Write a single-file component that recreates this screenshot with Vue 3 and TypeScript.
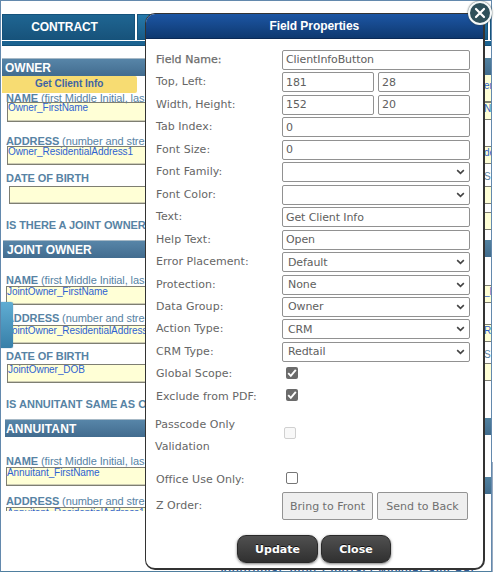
<script setup lang="ts">
import { ref } from 'vue'

type Kind = 'text' | 'pair' | 'select' | 'check'
interface Row {
  label: string
  kind: Kind
  values: string[]
  strong?: boolean
}

const rows = ref<Row[]>([
  { label: 'Field Name:', kind: 'text', values: ['ClientInfoButton'], strong: true },
  { label: 'Top, Left:', kind: 'pair', values: ['181', '28'] },
  { label: 'Width, Height:', kind: 'pair', values: ['152', '20'] },
  { label: 'Tab Index:', kind: 'text', values: ['0'] },
  { label: 'Font Size:', kind: 'text', values: ['0'] },
  { label: 'Font Family:', kind: 'select', values: [''] },
  { label: 'Font Color:', kind: 'select', values: [''] },
  { label: 'Text:', kind: 'text', values: ['Get Client Info'] },
  { label: 'Help Text:', kind: 'text', values: ['Open'] },
  { label: 'Error Placement:', kind: 'select', values: ['Default'] },
  { label: 'Protection:', kind: 'select', values: ['None'] },
  { label: 'Data Group:', kind: 'select', values: ['Owner'] },
  { label: 'Action Type:', kind: 'select', values: ['CRM'] },
  { label: 'CRM Type:', kind: 'select', values: ['Redtail'] },
  { label: 'Global Scope:', kind: 'check', values: [] },
  { label: 'Exclude from PDF:', kind: 'check', values: [] },
])
</script>

<template>
  <main class="screen">
    <div class="page">
      <nav class="tabs">
        <div class="tab">CONTRACT</div>
        <div class="tab next"></div>
        <div class="tab last"></div>
      </nav>
      <div class="columns">
        <div class="form">
          <section class="owner">
            <h2>OWNER</h2>
            <div class="client">Get Client Info</div>
            <p class="cap"><b>NAME</b> (first Middle Initial, las</p>
            <div class="box first">Owner_FirstName</div>
            <p class="cap address"><b>ADDRESS</b> (number and stre</p>
            <div class="box">Owner_ResidentialAddress1</div>
            <p class="cap dob"><b>DATE OF BIRTH</b></p>
            <div class="box birth"></div>
            <p class="cap question"><b>IS THERE A JOINT OWNER</b></p>
          </section>
          <section class="joint">
            <h2>JOINT OWNER</h2>
            <p class="cap name"><b>NAME</b> (first Middle Initial, las</p>
            <div class="box">JointOwner_FirstName</div>
            <p class="cap address"><b>ADDRESS</b> (number and stre</p>
            <div class="box">JointOwner_ResidentialAddress</div>
            <p class="cap dob"><b>DATE OF BIRTH</b></p>
            <div class="box joint-dob">JointOwner_DOB</div>
            <p class="cap question"><b>IS ANNUITANT SAME AS O</b></p>
          </section>
          <section class="annuitant">
            <h2>ANNUITANT</h2>
            <p class="cap name"><b>NAME</b> (first Middle Initial, las</p>
            <div class="box">Annuitant_FirstName</div>
            <p class="cap address"><b>ADDRESS</b> (number and stre</p>
            <div class="box cut">Annuitant_ResidentialAddress1</div>
          </section>
        </div>
        <div class="edge">
          <div class="bar"></div>
          <div class="cell tall">er</div>
          <div class="cell">N</div>
          <div class="cell s25">de</div>
          <div class="st">ST</div>
          <div class="cell"></div>
          <div class="cell s8"></div>
          <div class="bar s9"></div>
          <div class="cell s28">_F</div>
          <div class="cell s20">R</div>
          <div class="st low">ST</div>
          <div class="cell"></div>
          <div class="bar s36"></div>
          <div class="bar s42"></div>
          <div class="cell s30">SS</div>
        </div>
      </div>
      <p class="bottom-copy">Additional Joint Contract Number and Rel</p>
    </div>
    <div class="scroll-edge"></div>
    <div class="drawer"></div>

    <section class="dialog">
      <header>Field Properties</header>
      <div class="body">
        <div v-for="row in rows" :key="row.label" class="row">
          <label :class="{ strong: row.strong }">{{ row.label }}</label>
          <div class="control">
            <template v-if="row.kind !== 'check'">
              <div v-for="(value, i) in row.values" :key="i" class="input" :class="row.kind">
                <span>{{ value }}</span>
                <svg v-if="row.kind === 'select'" viewBox="0 0 10 6"><path d="M1.3 1 5 4.5 8.7 1" /></svg>
              </div>
            </template>
            <div v-else class="check on"><svg viewBox="0 0 12 12"><path d="M2.2 6.2 4.8 8.8 9.8 2.9" /></svg></div>
          </div>
        </div>
        <div class="row passcode">
          <label>Passcode Only<br />Validation</label>
          <div class="control"><div class="check disabled"></div></div>
        </div>
        <div class="row office">
          <label>Office Use Only:</label>
          <div class="control"><div class="check"></div></div>
        </div>
        <div class="row order">
          <label>Z Order:</label>
          <div class="control"><button>Bring to Front</button><button>Send to Back</button></div>
        </div>
      </div>
      <footer><button class="update">Update</button><button>Close</button></footer>
    </section>
    <div class="close"><svg viewBox="0 0 12 12"><path d="M2 2 10 10M10 2 2 10" /></svg></div>
  </main>
</template>

<style>
body { margin: 0; background: #fff; }
</style>

<style scoped>
* { box-sizing: border-box; }
h2, p { margin: 0; }
.screen { position: relative; width: 503px; height: 572px; overflow: hidden; background: #fff; font-family: "Liberation Sans", Arial, sans-serif; }
.page { position: relative; width: 492px; height: 572px; overflow: hidden; border: 1px solid #6389ad; border-bottom-color: #4f7f9f; padding: 13px 0 0 1px; }
.tabs { display: flex; height: 32px; background: #1b6391; border-bottom: 1px solid #135078; }
.tab { flex: none; width: 135px; height: 27px; border-right: 2px solid #fff; border-bottom: 1px solid #fff; background: linear-gradient(#1f6693, #17527a); color: #fff; font-size: 12px; font-weight: bold; line-height: 27px; text-align: center; padding-right: 8px; letter-spacing: -0.1px; box-shadow: inset 0 0 0 1px #15537c; }
.tab.next { width: 353px; background: linear-gradient(#267bad, #185984); }
.tab.last { width: 1px; border-right: 0; }
.columns { display: flex; justify-content: space-between; margin-top: 12px; height: 453px; }
.form { width: 150px; overflow: hidden; }
h2 { height: 18px; border-top: 1px solid #a7b9c6; background: linear-gradient(#5785a8, #426c8f); color: #fff; font-size: 12px; line-height: 18px; padding-left: 3px; white-space: nowrap; }
.client { width: 135px; height: 17px; border-radius: 0 2px 2px 0; background: #f7dc72; color: #3d63a5; font-size: 10px; font-weight: bold; line-height: 16px; padding-left: 33px; }
.cap { height: 10px; margin-left: 4px; color: #5783a4; font-size: 11px; line-height: 10px; white-space: nowrap; letter-spacing: -0.09px; }
.box { width: 160px; height: 19px; margin-left: 5px; border: 1px solid #7e7e72; background: #ffffd6; box-shadow: inset 0 -1px #cecdb4; color: #2e62d2; font-size: 10px; line-height: 10px; white-space: nowrap; letter-spacing: -0.07px; }
.owner { height: 182px; }
.owner .box.first { margin-top: -1px; height: 20px; }
.owner .address { margin-top: 14px; }
.owner .address + .box { margin-top: 0; }
.owner .dob { margin-top: 8px; }
.owner .box.birth { margin-top: 3px; margin-left: 7px; height: 18px; }
.owner .question { margin-top: 16px; }
.joint { height: 179px; }
.joint h2 { margin-left: 1px; padding-left: 4px; }
.joint .name { margin-top: 17px; }
.joint .box { margin-left: 4px; margin-top: 1px; }
.joint .address { margin-top: 8px; }
.joint .address + .box { margin-top: 2px; }
.joint .dob { margin-top: 7px; }
.joint .joint-dob { margin-top: 3px; margin-left: 5px; }
.joint .question { margin-top: 16px; letter-spacing: 0; }
.annuitant h2 { margin-left: 3px; padding-left: 1px; letter-spacing: 0.15px; }
.annuitant .name { margin-top: 19px; }
.annuitant .box { margin-left: 4px; margin-top: 1px; }
.annuitant .address { margin-top: 10px; }
.annuitant .box.cut { height: 6px; overflow: hidden; border-bottom: 0; box-shadow: none; }
.edge { width: 7px; overflow: hidden; color: #2e62c6; font-size: 10px; line-height: 11px; }
.bar { height: 17px; background: linear-gradient(#52819f, #416c8d); }
.cell { height: 18px; border-top: 1px solid #7e7e72; border-bottom: 1px solid #7e7e72; background: #ffffd6; overflow: hidden; }
.cell.tall { height: 27px; padding-top: 5px; border-top: 0; }
.s25 { margin-top: 26px; }
.st { height: 22px; padding-top: 7px; color: #5783a4; }
.s8 { margin-top: 8px; }
.s9 { margin-top: 10px; }
.s28 { margin-top: 28px; }
.s20 { margin-top: 21px; }
.st.low { height: 21px; }
.s36 { margin-top: 37px; }
.s42 { margin-top: 42px; }
.s30 { margin-top: 31px; }
.bottom-copy { position: absolute; left: 219px; bottom: -5px; color: #35598f; font-size: 10px; font-weight: bold; line-height: 10px; white-space: nowrap; letter-spacing: 1.4px; }
.scroll-edge { position: absolute; left: 492px; top: 462px; width: 1px; height: 110px; background: #9aabc0; }
.drawer { position: absolute; left: 1px; top: 302px; width: 12px; height: 46px; border-radius: 0 2px 2px 0; background: linear-gradient(#60add3, #377fa8); box-shadow: 0 0 1px #2e6b91; }

.dialog { position: absolute; left: 145px; top: 13px; width: 339.5px; height: 557px; overflow: hidden; border: 1px solid #333; border-right-width: 2px; border-bottom-width: 2px; border-radius: 10px; background: #fff; color: #666; font: 11px "DejaVu Sans", Verdana, sans-serif; }
header { height: 25px; border-bottom: 1px solid #0b2a56; background: linear-gradient(#1d56a4, #0e3970); color: #fff; font: bold 12px/25px "Liberation Sans", Arial, sans-serif; text-align: center; letter-spacing: -0.06px; }
.body { padding: 9.6px 0 0 10px; }
.row { display: grid; grid-template-columns: 126px 190px; height: 22.47px; align-items: center; }
.row label { line-height: 22px; white-space: nowrap; letter-spacing: 0.04px; }
.strong { -webkit-text-stroke: 0.25px #777; }
.control { display: flex; gap: 4px; align-items: center; }
.input { display: flex; align-items: center; justify-content: space-between; flex: none; width: 188px; height: 20px; border: 1px solid #919191; border-radius: 2px; padding: 0 3px; color: #606060; white-space: nowrap; letter-spacing: -0.1px; }
.input.pair { width: 92px; }
.input.select { padding: 0 4px 0 5px; }
.input svg { width: 9px; height: 6px; fill: none; stroke: #444; stroke-width: 1.8; }
.check { width: 12px; height: 12px; border: 1px solid #767676; border-radius: 2px; margin-left: 4px; background: #fff; }
.check.on { background: #6b6b6b; border: 0; margin-top: -3px; }
.check svg { display: block; width: 12px; height: 12px; fill: none; stroke: #fff; stroke-width: 1.9; }
.check.disabled { border-color: #d0d0d0; background: #f8f8f8; margin-left: 2px; margin-top: -5px; }
.passcode { height: 46px; margin-top: 4.5px; }
.passcode label { margin-left: -1px; }
.office { height: 24px; margin-top: 9px; }
.office .check { margin-top: -4px; }
.order { height: 28px; margin-top: 0.5px; }
.order button { width: 91px; height: 28px; border: 1px solid #949494; border-radius: 2px; padding: 0; background: #efefef; color: #707070; font: inherit; white-space: nowrap; }
footer { display: flex; gap: 3px; padding: 15px 0 0 91px; }
footer button { width: 70px; height: 28px; border: 1px solid #292929; border-radius: 9px; padding: 0; background: linear-gradient(#505050, #303030); box-shadow: 0 1px 3px #777; color: #fff; font: bold 11px "DejaVu Sans", sans-serif; text-shadow: 0 -1px #111; }
footer .update { width: 81px; }
.close { position: absolute; left: 468px; top: 1px; width: 24px; height: 24px; border: 2px solid #f5f8f8; border-radius: 50%; background: #2f505a; box-shadow: 0 0 2px #344; display: grid; place-items: center; }
.close svg { width: 12px; height: 12px; stroke: #fff; stroke-width: 2.2; stroke-linecap: round; }
</style>
